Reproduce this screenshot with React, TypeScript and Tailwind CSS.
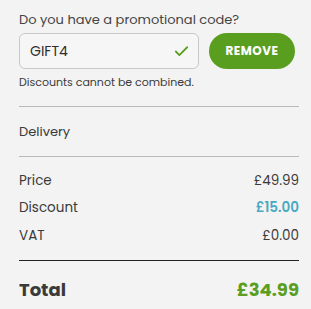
import { Check } from 'lucide-react'

const rows = [
  { label: 'Price', value: '£49.99', className: 'text-[#3a3a3a]' },
  { label: 'Discount', value: '£15.00', className: 'font-semibold text-[#4aa9c2]' },
  { label: 'VAT', value: '£0.00', className: 'text-[#3a3a3a]' },
]

export default function App() {
  return (
    <div className="min-h-[309px] w-[311px] bg-[#f3f3f3] pl-[19px] pr-[12px] pt-[10px] font-['Poppins','Inter',sans-serif] text-[#3a3a3a]">
      <p className="text-[13px] leading-[20px] text-[#444]">Do you have a promotional code?</p>
      <div className="mt-[3px] flex items-center gap-[10px]">
        <div className="flex h-[36px] w-[180px] items-center justify-between rounded-[6px] border border-[#c9c9c9] bg-[#f6f6f6] pl-[10px] pr-[8px]">
          <span className="text-[14px] text-[#2f2f2f]">GIFT4</span>
          <Check size={17} strokeWidth={2.5} className="text-[#5a9e1f]" />
        </div>
        <button className="h-[36px] w-[86px] rounded-full bg-[#5a9e1f] text-[12px] font-bold tracking-[0.5px] text-white">
          REMOVE
        </button>
      </div>
      <p className="mt-[5px] text-[11px] leading-[16px] text-[#3a3a3a]">Discounts cannot be combined.</p>

      <div className="mt-[16px] border-t border-[#b8b8b8]" />
      <div className="flex h-[49px] items-center pt-[1px] text-[13px]">Delivery</div>
      <div className="border-t border-[#b8b8b8]" />

      <div className="pt-[10px]">
        {rows.map((r) => (
          <div key={r.label} className="flex h-[27.5px] items-center justify-between text-[13.5px]">
            <span>{r.label}</span>
            <span className={r.className}>{r.value}</span>
          </div>
        ))}
      </div>

      <div className="mt-[10px] border-t border-[#222]" />
      <div className="flex h-[58px] items-center justify-between">
        <span className="text-[18px] font-bold text-[#3a3a3a]">Total</span>
        <span className="text-[18px] font-bold text-[#5a9e1f]">£34.99</span>
      </div>
    </div>
  )
}
